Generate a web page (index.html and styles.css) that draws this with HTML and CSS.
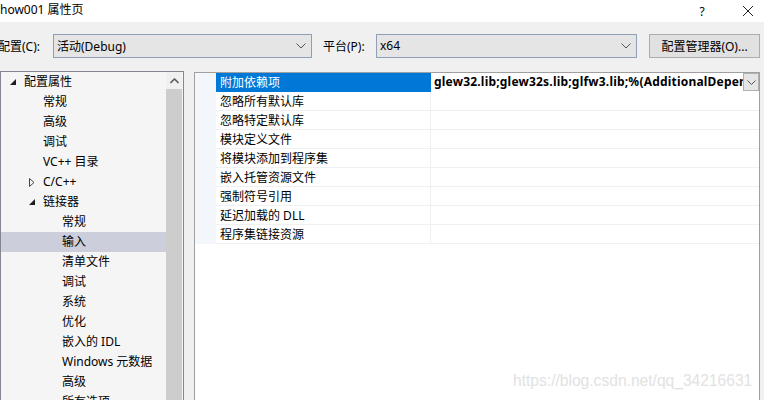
FILE: index.html
```html
<!DOCTYPE html>
<html lang="zh-CN">
<head>
    <meta charset="UTF-8">
    <title>属性页</title>
    <link rel="stylesheet" href="styles.css">
</head>
<body>
    <div class="window">
        <div class="title-bar">
            <span class="title">how001 属性页</span>
            <span class="title-btn help">?</span>
            <span class="title-btn close">
                <svg width="12" height="12" viewBox="0 0 12 12"><path d="M1 1L11 11M11 1L1 11" stroke="#222" stroke-width="1"/></svg>
            </span>
        </div>

        <div class="toolbar">
            <label class="tb-label">配置(C):</label>
            <div class="combo combo-config">
                <span>活动(Debug)</span>
                <svg class="chev" width="10" height="6" viewBox="0 0 10 6"><path d="M0.5 0.5L5 5L9.5 0.5" fill="none" stroke="#555" stroke-width="1"/></svg>
            </div>
            <label class="tb-label platform-label">平台(P):</label>
            <div class="combo combo-platform">
                <span>x64</span>
                <svg class="chev" width="10" height="6" viewBox="0 0 10 6"><path d="M0.5 0.5L5 5L9.5 0.5" fill="none" stroke="#555" stroke-width="1"/></svg>
            </div>
            <button class="manager-btn">配置管理器(O)...</button>
        </div>

        <div class="main">
            <div class="tree-panel">
                <ul class="tree">
                    <li class="lvl0"><svg class="tri" width="6" height="6" viewBox="0 0 6 6"><path d="M6 0V6H0Z" fill="#1e1e1e"/></svg>配置属性</li>
                    <li class="lvl1">常规</li>
                    <li class="lvl1">高级</li>
                    <li class="lvl1">调试</li>
                    <li class="lvl1">VC++ 目录</li>
                    <li class="lvl1"><svg class="tri closed" width="6" height="9" viewBox="0 0 6 9"><path d="M0.5 0.5V8.5L5 4.5Z" fill="none" stroke="#444" stroke-width="1"/></svg>C/C++</li>
                    <li class="lvl1"><svg class="tri" width="6" height="6" viewBox="0 0 6 6"><path d="M6 0V6H0Z" fill="#1e1e1e"/></svg>链接器</li>
                    <li class="lvl2">常规</li>
                    <li class="lvl2 selected">输入</li>
                    <li class="lvl2">清单文件</li>
                    <li class="lvl2">调试</li>
                    <li class="lvl2">系统</li>
                    <li class="lvl2">优化</li>
                    <li class="lvl2">嵌入的 IDL</li>
                    <li class="lvl2">Windows 元数据</li>
                    <li class="lvl2">高级</li>
                    <li class="lvl2">所有选项</li>
                </ul>
                <div class="scrollbar">
                    <div class="scroll-up">
                        <svg width="9" height="6" viewBox="0 0 9 6"><path d="M0.5 5L4.5 1L8.5 5" fill="none" stroke="#606060" stroke-width="1.6"/></svg>
                    </div>
                    <div class="scroll-thumb"></div>
                </div>
            </div>

            <div class="prop-panel">
                <div class="prop-row active">
                    <div class="gutter"></div>
                    <div class="prop-name">附加依赖项</div>
                    <div class="prop-value">
                        <span class="value-text">glew32.lib;glew32s.lib;glfw3.lib;%(AdditionalDependencies)</span>
                        <span class="value-drop">
                            <svg width="9" height="5" viewBox="0 0 9 5"><path d="M0.5 0.5L4.5 4.5L8.5 0.5" fill="none" stroke="#555" stroke-width="1"/></svg>
                        </span>
                    </div>
                </div>
                <div class="prop-row"><div class="gutter"></div><div class="prop-name">忽略所有默认库</div><div class="prop-value"></div></div>
                <div class="prop-row"><div class="gutter"></div><div class="prop-name">忽略特定默认库</div><div class="prop-value"></div></div>
                <div class="prop-row"><div class="gutter"></div><div class="prop-name">模块定义文件</div><div class="prop-value"></div></div>
                <div class="prop-row"><div class="gutter"></div><div class="prop-name">将模块添加到程序集</div><div class="prop-value"></div></div>
                <div class="prop-row"><div class="gutter"></div><div class="prop-name">嵌入托管资源文件</div><div class="prop-value"></div></div>
                <div class="prop-row"><div class="gutter"></div><div class="prop-name">强制符号引用</div><div class="prop-value"></div></div>
                <div class="prop-row"><div class="gutter"></div><div class="prop-name">延迟加载的 DLL</div><div class="prop-value"></div></div>
                <div class="prop-row"><div class="gutter"></div><div class="prop-name">程序集链接资源</div><div class="prop-value"></div></div>
            </div>
        </div>

        <div class="watermark">https://blog.csdn.net/qq_34216631</div>
    </div>
</body>
</html>
```

FILE: styles.css
```css
* {
    margin: 0;
    padding: 0;
    box-sizing: border-box;
}

body {
    width: 764px;
    height: 400px;
    overflow: hidden;
    background: #f0f0f0;
    font-family: "Noto Sans", "Noto Sans CJK SC", sans-serif;
    font-size: 12px;
    color: #000;
}

.window {
    position: relative;
    height: 400px;
}

.title-bar {
    height: 22px;
    background: #fff;
    display: flex;
    align-items: center;
}

.title {
    line-height: 16px;
    margin-top: -2px;
}

.title-btn {
    display: flex;
    align-items: center;
    justify-content: center;
    height: 22px;
}

.help {
    margin-left: auto;
    width: 14px;
    margin-right: 32px;
}

.close {
    width: 14px;
    margin-right: 9px;
}

.toolbar {
    height: 48px;
    display: flex;
    align-items: center;
    padding-bottom: 1px;
}

.tb-label {
    margin-left: -2px;
    width: 55px;
    white-space: nowrap;
}

.platform-label {
    margin-left: 11px;
    width: 53px;
}

.combo {
    height: 24px;
    background: #e5e5e5;
    border: 1px solid #8f9fb5;
    display: flex;
    align-items: center;
    justify-content: space-between;
    padding: 0 4px 0 3px;
}

.combo-config {
    width: 259px;
}

.combo-platform {
    width: 261px;
}

.chev {
    margin-right: 1px;
}

.manager-btn {
    margin-left: 12px;
    width: 111px;
    height: 24px;
    background: #e1e1e1;
    border: 1px solid #adadad;
    font-family: inherit;
    font-size: 12px;
    color: #000;
}

.main {
    display: flex;
    align-items: flex-start;
    margin-top: 1px;
}

.tree-panel {
    width: 184px;
    height: 340px;
    border: 1px solid #828790;
    border-bottom: none;
    background: #f5f5f5;
    display: flex;
}

.tree {
    list-style: none;
    flex: 1;
    overflow: hidden;
}

.tree li {
    height: 20px;
    line-height: 20px;
    white-space: nowrap;
    position: relative;
}

.lvl0 { padding-left: 23px; }
.lvl1 { padding-left: 42px; }
.lvl2 { padding-left: 61px; }

.tree li.selected {
    background: #cccedb;
}

.tri {
    position: absolute;
    top: 7px;
}

.lvl0 .tri { left: 9px; }
.lvl1 .tri { left: 28px; }

.tri.closed {
    top: 6px;
}

.scrollbar {
    width: 16px;
    margin-right: 1px;
    display: flex;
    flex-direction: column;
}

.scroll-up {
    height: 17px;
    background: #f0f0f0;
    display: flex;
    align-items: center;
    justify-content: center;
}

.scroll-thumb {
    flex: 1;
    background: #cdcdcd;
}

.prop-panel {
    margin-left: 10px;
    margin-top: 1px;
    width: 566px;
    height: 340px;
    background: #fff;
    border: 1px solid #a0a0a0;
    border-bottom: none;
}

.prop-row {
    display: flex;
    height: 19px;
}

.gutter {
    width: 21px;
    background: #f3f6fb;
}

.prop-name {
    width: 215px;
    padding-left: 4px;
    line-height: 20px;
    border-bottom: 1px solid #f0f0f0;
    border-right: 1px solid #f0f0f0;
    white-space: nowrap;
}

.prop-value {
    flex: 1;
    display: flex;
    align-items: center;
    min-width: 0;
    border-bottom: 1px solid #f0f0f0;
}

.prop-row.active .prop-name {
    background: #0078d7;
    color: #fff;
    border-color: #0078d7;
}

.prop-row.active .prop-value {
    border-bottom-color: #fff;
}

.value-text {
    flex: 1;
    min-width: 0;
    overflow: hidden;
    white-space: nowrap;
    font-weight: bold;
    letter-spacing: 0.2px;
    padding-left: 3px;
    line-height: 18px;
}

.value-drop {
    width: 16px;
    height: 18px;
    background: #e5e5e5;
    border: 1px solid #b0b0b0;
    display: flex;
    align-items: center;
    justify-content: center;
}

.watermark {
    position: absolute;
    left: 513px;
    top: 372px;
    font-family: "Liberation Sans", Arial, sans-serif;
    font-size: 15.6px;
    color: #e2e2e2;
    white-space: nowrap;
}
```
